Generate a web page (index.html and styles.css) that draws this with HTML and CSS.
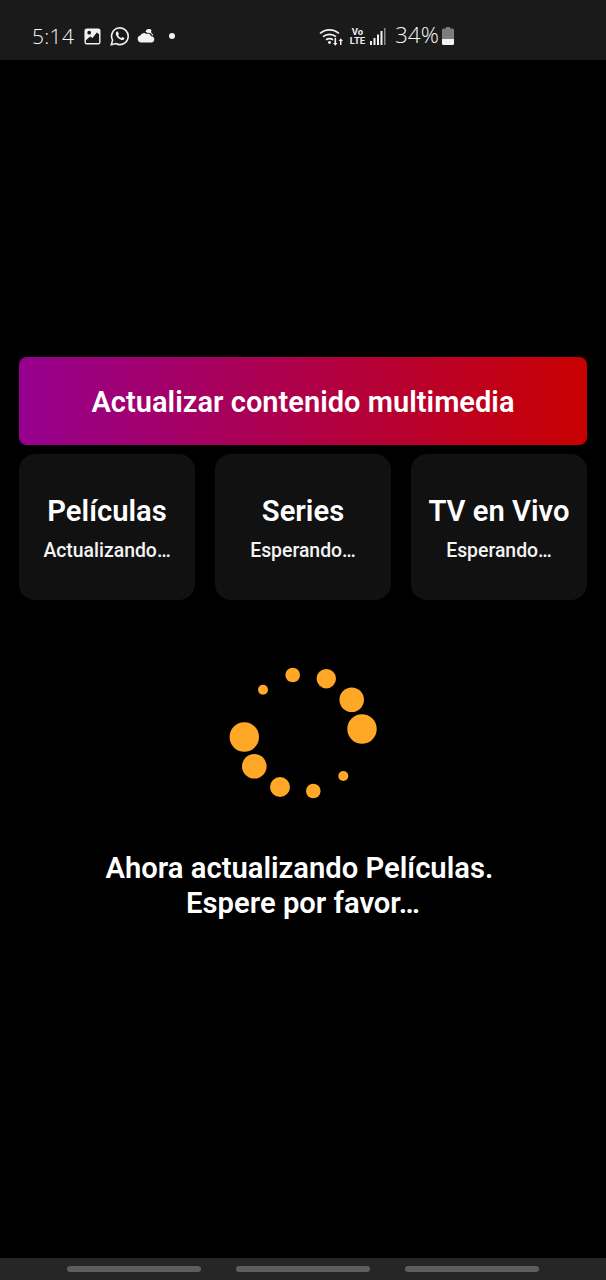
FILE: index.html
```html
<!DOCTYPE html>
<html lang="es">
<head>
<meta charset="utf-8">
<title>Actualizar contenido multimedia</title>
<link rel="stylesheet" href="styles.css">
</head>
<body>
<div class="page">
  <header class="status">
    <div class="status-left">
      <span class="time">5:14</span>
      <svg class="ic-img" viewBox="0 0 18 18"><path fill="#f2f2f2" fill-rule="evenodd" d="M3 .5h12A2.500 2.500 0 0 1 17.500 3v12a2.500 2.500 0 0 1-2.500 2.500H3A2.500 2.500 0 0 1 .5 15V3A2.500 2.500 0 0 1 3 .5zM5.500 3a2 2 0 1 0 0 4 2 2 0 0 0 0-4zM2 13v3h14V6.500l-2.500-1.800-4.500 6-2.500-1.800z"/></svg>
      <svg class="ic-wa" viewBox="0 0 20 20"><path fill="none" stroke="#f2f2f2" stroke-width="1.600" d="M1.300 18.700l1.300-4.500A8.300 8.300 0 1 1 5.900 17.500z"/><path fill="#f2f2f2" d="M7.100 5.500c-.9.300-1.500 1.400-1.300 2.600.4 2.500 3.100 5.300 5.700 5.900 1.300.3 2.500-.3 2.800-1.300.1-.4.100-.7 0-.8l-2-1-.9 1.100c-1.300-.4-2.700-1.700-3.300-3.100l.8-1-.9-2.200c-.2-.2-.6-.3-.9-.2z"/></svg>
      <svg class="ic-cloud" viewBox="0 0 18 14"><path fill="#f2f2f2" d="M4 13.500a3.500 3.500 0 0 1-.6-6.900A4 4 0 0 1 9.600 5a3 3 0 0 1 4.400 2.300 3.100 3.100 0 0 1 .3 6.200z"/><path fill="#f2f2f2" d="M8.500 2.500A3.500 3.500 0 0 1 14.500 1a3.500 3.500 0 0 0 1.800 4.500l-1 1.200A4 4 0 0 0 10.500 4z"/></svg>
      <span class="dot"></span>
    </div>
    <div class="status-right">
      <svg class="ic-wifi" viewBox="0 0 24 19"><g fill="none" stroke="#f2f2f2" stroke-width="1.700"><path d="M1 6.500a14 14 0 0 1 19 0"/><path d="M4 9.700a10 10 0 0 1 13 0"/><path d="M7 12.800a6 6 0 0 1 7 0"/></g><circle cx="10.500" cy="15.500" r="1.400" fill="#f2f2f2"/><path fill="#f2f2f2" d="M15.500 11h1.600v5h1.400l-2.200 2.800-2.200-2.800h1.400zM21 18h1.500v-4H24l-2.200-2.800-2.200 2.800H21z"/></svg>
      <div class="volte"><span>Vo</span><span>LTE</span></div>
      <svg class="ic-signal" viewBox="0 0 16 17"><g fill="#f2f2f2"><rect x="0" y="13" width="2" height="4"/><rect x="3.500" y="10" width="2" height="7"/><rect x="7" y="6.500" width="2" height="10.500"/><rect x="10.500" y="3" width="2" height="14"/></g><rect x="14" y="0" width="1.500" height="17" fill="#8a8a8a"/></svg>
      <span class="pct">34%</span>
      <svg class="ic-batt" viewBox="0 0 12 18"><path fill="#7d7d7d" d="M4 0h4v1.500h2.500A1.500 1.500 0 0 1 12 3v9H0V3a1.500 1.500 0 0 1 1.500-1.500H4z"/><path fill="#f2f2f2" d="M0 12h12v4.500a1.500 1.500 0 0 1-1.500 1.500h-9A1.500 1.500 0 0 1 0 16.500z"/></svg>
    </div>
  </header>

  <main class="content">
    <div class="banner">Actualizar contenido multimedia</div>
    <section class="cards">
      <article class="card"><h2 class="card-title">Películas</h2><p class="card-sub">Actualizando…</p></article>
      <article class="card"><h2 class="card-title">Series</h2><p class="card-sub">Esperando…</p></article>
      <article class="card"><h2 class="card-title">TV en Vivo</h2><p class="card-sub">Esperando…</p></article>
    </section>
    <svg class="spinner" viewBox="-2 0 170 145">
      <g fill="#ffa726">
        <circle cx="142" cy="69" r="14.700"/>
        <circle cx="131.700" cy="39.700" r="12.300"/>
        <circle cx="106.300" cy="18.700" r="9.700"/>
        <circle cx="72.700" cy="15" r="7.300"/>
        <circle cx="43" cy="29.700" r="5"/>
        <circle cx="24.300" cy="77" r="14.700"/>
        <circle cx="34.300" cy="106.300" r="12.300"/>
        <circle cx="60" cy="127" r="10"/>
        <circle cx="93.300" cy="131" r="7.300"/>
        <circle cx="123.300" cy="116" r="5"/>
      </g>
    </svg>
    <p class="message">Ahora actualizando Películas.&nbsp;<br>Espere por favor…</p>
  </main>

  <nav class="navbar">
    <span class="pill"></span>
    <span class="pill"></span>
    <span class="pill"></span>
  </nav>
</div>
</body>
</html>
```

FILE: styles.css
```css
* { box-sizing: border-box; }
html, body { margin: 0; padding: 0; background: #000; }
body { font-family: Roboto, "Liberation Sans", sans-serif; color: #fff; }
.page { width: 606px; height: 1280px; display: flex; flex-direction: column; overflow: hidden; }

.status { height: 60px; flex: none; background: #1a1a1a; display: flex; align-items: center; padding: 12px 0 0 32px; color: #f6f6f6; }
.status-left { width: 287px; display: flex; align-items: center; }
.status-right { display: flex; align-items: center; }
.time { font-family: "Open Sans", Roboto, sans-serif; font-size: 21px; font-weight: 300; line-height: 24px; width: 52px; letter-spacing: 0.3px; }
.ic-img { width: 17px; height: 17px; margin-right: 9px; }
.ic-wa { width: 20px; height: 20px; margin-right: 7px; }
.ic-cloud { width: 18px; height: 14px; margin-right: 14px; }
.dot { width: 6px; height: 6px; border-radius: 50%; background: #f2f2f2; }
.ic-wifi { width: 24px; height: 19px; margin-right: 7px; }
.volte { display: flex; flex-direction: column; align-items: center; width: 15px; font-size: 9.5px; line-height: 9px; font-weight: 700; color: #eee; margin-right: 5px; }
.ic-signal { width: 16px; height: 17px; margin-right: 9px; }
.pct { font-family: "Open Sans", Roboto, sans-serif; font-size: 22.5px; font-weight: 300; line-height: 24px; margin: 0 3px 2px 0; }
.ic-batt { width: 12px; height: 18px; }

.content { flex: 1; padding: 297px 19px 0; display: flex; flex-direction: column; align-items: stretch; }
.banner { height: 88px; border-radius: 8px; background: linear-gradient(90deg, #96008f, #c80000); display: flex; align-items: center; justify-content: center; padding-top: 2px; font-size: 29px; letter-spacing: 0.03px; font-weight: 600; }
.cards { display: grid; grid-template-columns: repeat(3, 176px); justify-content: space-between; margin-top: 9px; }
.card { height: 146px; border-radius: 16px; background: #111; display: flex; flex-direction: column; align-items: center; padding-top: 39px; }
.card-title { margin: 0; font-size: 29.2px; line-height: 36px; font-weight: 600; }
.card-sub { margin: 10px 0 0; font-size: 19.4px; line-height: 24px; font-weight: 500; color: #f4f4f4; }

.spinner { width: 170px; height: 145px; align-self: center; margin-top: 60px; flex: none; }
.message { margin: 46px 0 0; font-size: 29.2px; line-height: 35px; font-weight: 600; text-align: center; }

.navbar { height: 22px; flex: none; background: #262626; display: flex; justify-content: center; align-items: center; gap: 35px; padding-bottom: 1px; }
.pill { width: 134px; height: 6px; border-radius: 3px; background: #5e5e5e; }
```
